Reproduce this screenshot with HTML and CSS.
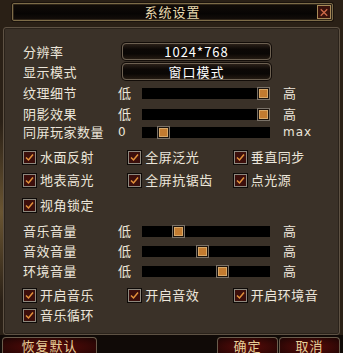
FILE: index.html
```html
<!DOCTYPE html>
<html lang="zh">
<head>
<meta charset="utf-8">
<link rel="stylesheet" href="styles.css">
</head>
<body>
<div class="window">
  <div class="titlebar">
    <div class="title-inner">
      <span class="title">系统设置</span>
      <span class="close">
        <svg width="13" height="13" viewBox="0 0 13 13"><path d="M3 3 L10 10 M10 3 L3 10" stroke="#d06a4a" stroke-width="1.4" fill="none"/></svg>
      </span>
    </div>
  </div>
  <div class="panel">
    <div class="row drop-row"><span class="label">分辨率</span><div class="dropdown">1024*768</div></div>
    <div class="row drop-row mt3"><span class="label">显示模式</span><div class="dropdown">窗口模式</div></div>

    <div class="row slider-row mt6"><span class="label">纹理细节</span><span class="lo">低</span><div class="track"><span class="thumb" style="left:115px"></span></div><span class="hi">高</span></div>
    <div class="row slider-row mt7"><span class="label">阴影效果</span><span class="lo">低</span><div class="track"><span class="thumb" style="left:115px"></span></div><span class="hi">高</span></div>
    <div class="row slider-row mt4"><span class="label">同屏玩家数量</span><span class="lo num">0</span><div class="track"><span class="thumb" style="left:15px"></span></div><span class="hi num">max</span></div>

    <div class="row check-row mt11">
      <label class="check"><span class="box"><svg width="11" height="11" viewBox="0 0 11 11"><path d="M2 5.5 L4.5 8 L9 2.5" stroke="#e3913a" stroke-width="1.5" fill="none"/></svg></span>水面反射</label>
      <label class="check"><span class="box"><svg width="11" height="11" viewBox="0 0 11 11"><path d="M2 5.5 L4.5 8 L9 2.5" stroke="#e3913a" stroke-width="1.5" fill="none"/></svg></span>全屏泛光</label>
      <label class="check"><span class="box"><svg width="11" height="11" viewBox="0 0 11 11"><path d="M2 5.5 L4.5 8 L9 2.5" stroke="#e3913a" stroke-width="1.5" fill="none"/></svg></span>垂直同步</label>
    </div>
    <div class="row check-row mt9">
      <label class="check"><span class="box"><svg width="11" height="11" viewBox="0 0 11 11"><path d="M2 5.5 L4.5 8 L9 2.5" stroke="#e3913a" stroke-width="1.5" fill="none"/></svg></span>地表高光</label>
      <label class="check"><span class="box"><svg width="11" height="11" viewBox="0 0 11 11"><path d="M2 5.5 L4.5 8 L9 2.5" stroke="#e3913a" stroke-width="1.5" fill="none"/></svg></span>全屏抗锯齿</label>
      <label class="check"><span class="box"><svg width="11" height="11" viewBox="0 0 11 11"><path d="M2 5.5 L4.5 8 L9 2.5" stroke="#e3913a" stroke-width="1.5" fill="none"/></svg></span>点光源</label>
    </div>
    <div class="row check-row mt11">
      <label class="check"><span class="box"><svg width="11" height="11" viewBox="0 0 11 11"><path d="M2 5.5 L4.5 8 L9 2.5" stroke="#e3913a" stroke-width="1.5" fill="none"/></svg></span>视角锁定</label>
    </div>

    <div class="row slider-row mt12"><span class="label">音乐音量</span><span class="lo">低</span><div class="track"><span class="thumb" style="left:30px"></span></div><span class="hi">高</span></div>
    <div class="row slider-row mt6"><span class="label">音效音量</span><span class="lo">低</span><div class="track"><span class="thumb" style="left:54px"></span></div><span class="hi">高</span></div>
    <div class="row slider-row mt6"><span class="label">环境音量</span><span class="lo">低</span><div class="track"><span class="thumb" style="left:74px"></span></div><span class="hi">高</span></div>

    <div class="row check-row mt10">
      <label class="check"><span class="box"><svg width="11" height="11" viewBox="0 0 11 11"><path d="M2 5.5 L4.5 8 L9 2.5" stroke="#e3913a" stroke-width="1.5" fill="none"/></svg></span>开启音乐</label>
      <label class="check"><span class="box"><svg width="11" height="11" viewBox="0 0 11 11"><path d="M2 5.5 L4.5 8 L9 2.5" stroke="#e3913a" stroke-width="1.5" fill="none"/></svg></span>开启音效</label>
      <label class="check"><span class="box"><svg width="11" height="11" viewBox="0 0 11 11"><path d="M2 5.5 L4.5 8 L9 2.5" stroke="#e3913a" stroke-width="1.5" fill="none"/></svg></span>开启环境音</label>
    </div>
    <div class="row check-row mt6">
      <label class="check"><span class="box"><svg width="11" height="11" viewBox="0 0 11 11"><path d="M2 5.5 L4.5 8 L9 2.5" stroke="#e3913a" stroke-width="1.5" fill="none"/></svg></span>音乐循环</label>
    </div>
  </div>
  <div class="footer">
    <button class="btn btn-wide">恢复默认</button>
    <div class="spacer"></div>
    <button class="btn">确定</button>
    <button class="btn">取消</button>
  </div>
</div>
</body>
</html>
```
FILE: styles.css
```css
* { box-sizing: border-box; }
html, body { margin: 0; padding: 0; }
body {
  width: 343px;
  height: 353px;
  overflow: hidden;
  background: #241c14;
  font-family: "Noto Sans CJK SC", "Noto Sans", sans-serif;
  font-size: 13px;
  color: #ece6da;
}
.window {
  width: 343px;
  height: 353px;
  display: flex;
  flex-direction: column;
  background: radial-gradient(ellipse at 0% 60%, #6a5532 0%, #2a2016 30%), #241c14;
}
.titlebar {
  height: 27px;
  padding: 3px 10px 6px 12px;
}
.title-inner {
  height: 18px;
  position: relative;
  display: flex;
  align-items: center;
  justify-content: center;
  background: linear-gradient(#120c08, #070504 60%, #140e0a);
  border: 1px solid #7d6c48;
  box-shadow: 0 0 0 1px #1a120c, inset 0 0 0 1px #2e2418;
  border-radius: 2px;
}
.title {
  color: #eadbb0;
  letter-spacing: 1px;
  line-height: 18px;
}
.close {
  position: absolute;
  right: 1px;
  top: 1px;
  width: 14px;
  height: 14px;
  background: #3a120c;
  border: 1px solid #a88a58;
  display: flex;
  align-items: center;
  justify-content: center;
}
.panel {
  flex: 1;
  margin: 0 3px;
  padding: 15px 0 0 19px;
  background: #3a3128;
  border: 1px solid #5e5244;
  border-radius: 3px;
  box-shadow: inset 0 0 0 1px #2a221a;
  display: flex;
  flex-direction: column;
}
.row { display: flex; align-items: center; }
.mt3 { margin-top: 3px; }
.mt4 { margin-top: 4px; }
.mt6 { margin-top: 6px; }
.mt7 { margin-top: 7px; }
.mt9 { margin-top: 9px; }
.mt10 { margin-top: 10px; }
.mt11 { margin-top: 11px; }
.mt12 { margin-top: 12px; }
.label { letter-spacing: 0.5px; line-height: 14px; white-space: nowrap; }
.drop-row { height: 17px; }
.drop-row .label { width: 99px; }
.dropdown {
  width: 149px;
  height: 17px;
  border: 1px solid #6d6152;
  border-radius: 4px;
  box-shadow: 0 0 0 1px #120c08;
  background: linear-gradient(#2a2018, #0c0806 35%, #0a0705 65%, #241a12);
  color: #ffffff;
  text-align: center;
  line-height: 15px;
  letter-spacing: 1px;
  font-family: "DejaVu Sans", "Noto Sans CJK SC", sans-serif;
  font-size: 13px;
}
.dropdown:lang(zh) { font-family: "Noto Sans CJK SC", sans-serif; }
.slider-row { height: 14px; }
.slider-row .label { width: 95px; }
.lo { width: 24px; line-height: 14px; }
.num { font-family: "DejaVu Sans", sans-serif; font-size: 12px; }
.track {
  position: relative;
  width: 128px;
  height: 11px;
  background: #000;
}
.thumb {
  position: absolute;
  top: -1px;
  width: 13px;
  height: 13px;
  background: #c27b30;
  border: 1px solid #7a7268;
  box-shadow: inset 0 0 0 1px #1a120c, inset 0 0 0 2px #d8a868;
}
.hi { margin-left: 13px; line-height: 14px; }
.hi.num { letter-spacing: 1px; }
.check-row { height: 14px; }
.check {
  width: 110px;
  display: flex;
  align-items: center;
  gap: 4px;
  letter-spacing: 0.5px;
  white-space: nowrap;
  line-height: 14px;
}
.box {
  width: 13px;
  height: 13px;
  flex: none;
  background: #3c0f0c;
  border: 1px solid #8e887e;
  box-shadow: 0 0 0 1px #0e0a08;
  display: flex;
  align-items: center;
  justify-content: center;
}
.footer {
  height: 18px;
  display: flex;
  align-items: flex-end;
  padding: 0 3px 0 2px;
  background: #100a07;
}
.spacer { flex: 1; }
.btn {
  height: 16px;
  width: 61px;
  padding: 0;
  border: 1px solid #6a5c4c;
  border-bottom: none;
  border-radius: 4px 4px 0 0;
  background: radial-gradient(ellipse at 50% 60%, #5c0c0a 0%, #3a0806 55%, #1c0504 100%);
  color: #e8cf98;
  font-family: "Noto Sans CJK SC", sans-serif;
  font-size: 13px;
  letter-spacing: 1px;
  line-height: 14px;
}
.btn + .btn { margin-left: 1px; }
.btn-wide { width: 95px; }
```
